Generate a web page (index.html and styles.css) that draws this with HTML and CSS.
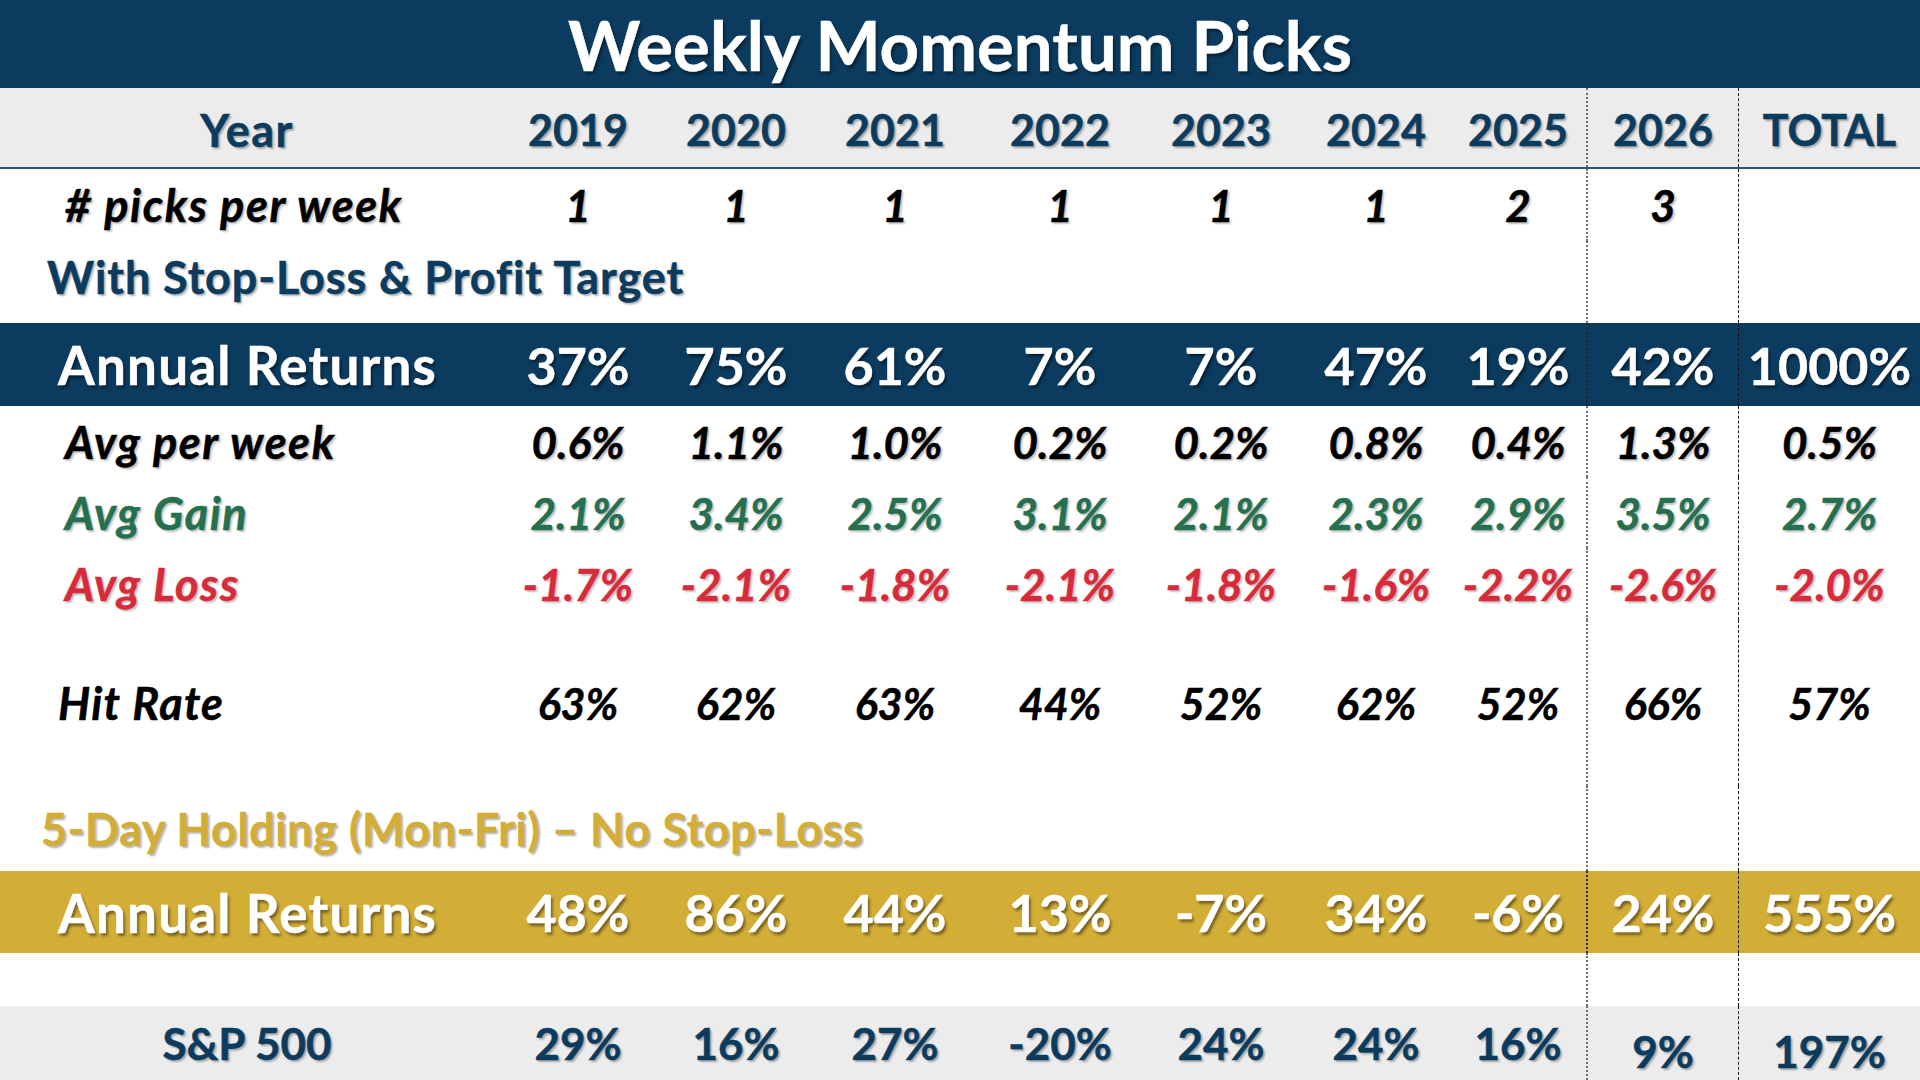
FILE: index.html
```html
<!DOCTYPE html>
<html lang="en">
<head>
<meta charset="utf-8">
<title>Weekly Momentum Picks</title>
<link rel="stylesheet" href="styles.css">
</head>
<body>
<main class="sheet">
  <header class="title">Weekly Momentum Picks</header>

  <div class="row head">
    <div class="cell year-lbl">Year</div>
    <div class="cell">2019</div><div class="cell">2020</div><div class="cell">2021</div><div class="cell">2022</div>
    <div class="cell">2023</div><div class="cell">2024</div><div class="cell">2025</div>
    <div class="cell c26">2026</div><div class="cell ctot">TOTAL</div>
  </div>

  <div class="row picks">
    <div class="cell lbl ind it-lbl">#&nbsp;picks per week</div>
    <div class="cell">1</div><div class="cell">1</div><div class="cell">1</div><div class="cell">1</div>
    <div class="cell">1</div><div class="cell">1</div><div class="cell">2</div>
    <div class="cell c26">3</div><div class="cell ctot"></div>
  </div>

  <div class="row section blue-sec">
    <div class="cell lbl span8">With Stop-Loss &amp; Profit Target</div>
    <div class="cell c26"></div><div class="cell ctot"></div>
  </div>

  <div class="row band navy">
    <div class="cell lbl band-lbl">Annual Returns</div>
    <div class="cell">37%</div><div class="cell">75%</div><div class="cell">61%</div><div class="cell">7%</div>
    <div class="cell">7%</div><div class="cell">47%</div><div class="cell">19%</div>
    <div class="cell c26">42%</div><div class="cell ctot">1000%</div>
  </div>

  <div class="row stat week">
    <div class="cell lbl ind it-lbl">Avg per week</div>
    <div class="cell">0.6%</div><div class="cell">1.1%</div><div class="cell">1.0%</div><div class="cell">0.2%</div>
    <div class="cell">0.2%</div><div class="cell">0.8%</div><div class="cell">0.4%</div>
    <div class="cell c26">1.3%</div><div class="cell ctot">0.5%</div>
  </div>

  <div class="row stat gain">
    <div class="cell lbl ind it-lbl">Avg Gain</div>
    <div class="cell">2.1%</div><div class="cell">3.4%</div><div class="cell">2.5%</div><div class="cell">3.1%</div>
    <div class="cell">2.1%</div><div class="cell">2.3%</div><div class="cell">2.9%</div>
    <div class="cell c26">3.5%</div><div class="cell ctot">2.7%</div>
  </div>

  <div class="row stat loss">
    <div class="cell lbl ind it-lbl">Avg Loss</div>
    <div class="cell">-1.7%</div><div class="cell">-2.1%</div><div class="cell">-1.8%</div><div class="cell">-2.1%</div>
    <div class="cell">-1.8%</div><div class="cell">-1.6%</div><div class="cell">-2.2%</div>
    <div class="cell c26">-2.6%</div><div class="cell ctot">-2.0%</div>
  </div>

  <div class="row hit">
    <div class="cell lbl hit-lbl">Hit Rate</div>
    <div class="cell">63%</div><div class="cell">62%</div><div class="cell">63%</div><div class="cell">44%</div>
    <div class="cell">52%</div><div class="cell">62%</div><div class="cell">52%</div>
    <div class="cell c26">66%</div><div class="cell ctot">57%</div>
  </div>

  <div class="row section gold-sec">
    <div class="cell lbl span8">5-Day Holding (Mon-Fri) – No Stop-Loss</div>
    <div class="cell c26"></div><div class="cell ctot"></div>
  </div>

  <div class="row band gold">
    <div class="cell lbl band-lbl">Annual Returns</div>
    <div class="cell">48%</div><div class="cell">86%</div><div class="cell">44%</div><div class="cell">13%</div>
    <div class="cell">-7%</div><div class="cell">34%</div><div class="cell">-6%</div>
    <div class="cell c26">24%</div><div class="cell ctot">555%</div>
  </div>

  <div class="row gap">
    <div class="cell span8"></div>
    <div class="cell c26"></div><div class="cell ctot"></div>
  </div>

  <div class="row spx">
    <div class="cell">S&amp;P 500</div>
    <div class="cell">29%</div><div class="cell">16%</div><div class="cell">27%</div><div class="cell">-20%</div>
    <div class="cell">24%</div><div class="cell">24%</div><div class="cell">16%</div>
    <div class="cell c26 low">9%</div><div class="cell ctot low">197%</div>
  </div>
</main>
</body>
</html>
```

FILE: styles.css
```css
* { box-sizing: border-box; }

html, body {
  margin: 0;
  padding: 0;
  background: #ffffff;
}

body {
  width: 1920px;
  height: 1080px;
  overflow: hidden;
  font-family: Lato, "Open Sans", "DejaVu Sans", sans-serif;
  font-weight: 700;
  -webkit-text-stroke: 0.5px currentColor;
}

.sheet {
  display: flex;
  flex-direction: column;
  width: 1920px;
  height: 1080px;
}

.title {
  height: 88px;
  background: #0b3c60;
  color: #ffffff;
  font-size: 69px;
  line-height: 90px;
  text-align: center;
  text-shadow: 2px 3px 3px rgba(0, 0, 0, 0.45);
}

.row {
  display: grid;
  grid-template-columns: 494px 168px 148px 170px 160px 162px 148px 136px 152px 182px;
}

.cell {
  display: flex;
  align-items: center;
  justify-content: center;
  white-space: nowrap;
  min-width: 0;
}

.c26 { border-left: 2px dotted #6e6e6e; }
.ctot { border-left: 1.5px dashed #111111; }

.lbl { justify-content: flex-start; }
.span8 { grid-column: 1 / 9; }

/* header */
.head {
  height: 81px;
  background: #ececec;
  border-bottom: 2px solid #2c5578;
  color: #0b3c60;
  font-size: 43px;
  text-shadow: 2px 2px 2px rgba(0, 0, 0, 0.3);
}
.head .cell { padding-top: 4px; }
.year-lbl { font-size: 45px; letter-spacing: 1.5px; }

/* italic row labels */
.it-lbl {
  font-size: 45px;
  letter-spacing: 1.6px;
}

/* picks per week */
.picks {
  height: 72px;
  color: #000000;
  font-size: 44px;
  font-style: italic;
  text-shadow: 2px 2px 2px rgba(0, 0, 0, 0.25);
}

.ind { padding-left: 65px; }

/* section captions */
.section .lbl { padding-bottom: 10px; }

.blue-sec {
  height: 82px;
  color: #0b3c60;
  font-size: 45px;
  letter-spacing: 0.9px;
  text-shadow: 2px 2px 2px rgba(0, 0, 0, 0.3);
}
.blue-sec .lbl { padding-left: 47px; }

.gold-sec {
  height: 85px;
  color: #d2ad38;
  font-size: 45px;
  letter-spacing: 0.55px;
  text-shadow: 2px 2px 2px rgba(0, 0, 0, 0.3);
}
.gold-sec .lbl { padding-left: 41px; padding-bottom: 0; }

/* coloured bands */
.band {
  height: 83px;
  color: #ffffff;
  font-size: 52px;
  text-shadow: 2px 3px 3px rgba(0, 0, 0, 0.45);
}
.band .c26 { border-left-color: #262626; }
.navy { background: #0b3c60; }
.gold { background: #d3ae37; height: 82px; }
.band-lbl {
  padding-left: 58px;
  font-size: 53px;
  letter-spacing: 1.2px;
}

/* stat rows */
.stat {
  height: 71px;
  font-size: 44px;
  font-style: italic;
  text-shadow: 2px 2px 2px rgba(0, 0, 0, 0.25);
}
.week { color: #000000; }
.gain { color: #24704f; }
.loss { color: #d72a3b; height: 72px; }

/* hit rate */
.hit {
  height: 166px;
  color: #000000;
  font-size: 43px;
  font-style: italic;
}
.hit-lbl {
  padding-left: 58px;
  font-size: 45px;
  letter-spacing: 1.2px;
}

.gap { height: 53px; }

/* S&P 500 */
.spx {
  height: 74px;
  background: #ececec;
  color: #0b3c60;
  font-size: 44px;
  text-shadow: 2px 2px 2px rgba(0, 0, 0, 0.3);
}
.low { padding-top: 16px; }
```
